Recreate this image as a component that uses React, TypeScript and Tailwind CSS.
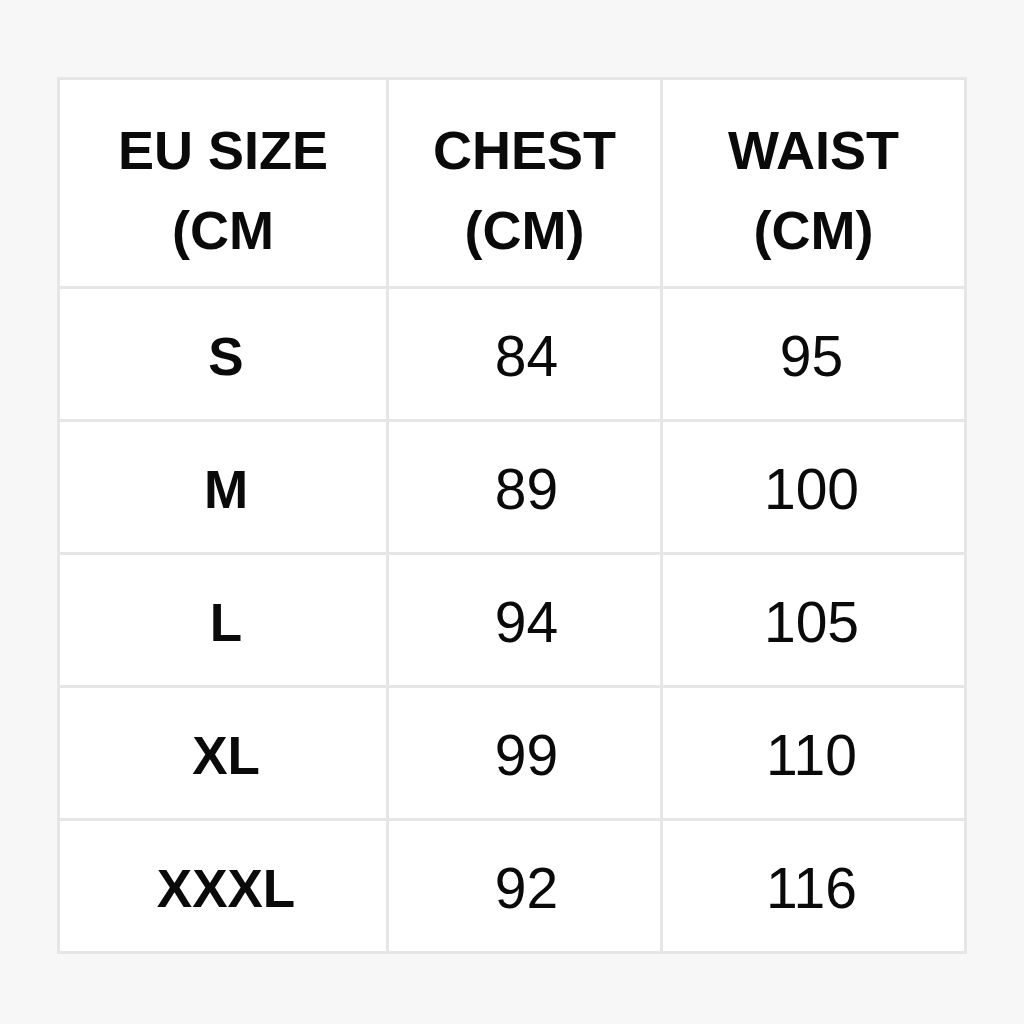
import React from "react";

const rows = [
  ["S", "84", "95"],
  ["M", "89", "100"],
  ["L", "94", "105"],
  ["XL", "99", "110"],
  ["XXXL", "92", "116"],
];

export default function App() {
  return (
    <div
      className="w-[1024px] h-[1024px] bg-[#f7f7f7] pt-[77px] pl-[57px] text-[#0a0a0a]"
      style={{ fontFamily: '"Liberation Sans", Arial, sans-serif' }}
    >
      <div className="grid grid-cols-[326px_271px_301px] grid-rows-[206px_repeat(5,130px)] gap-[3px] p-[3px] bg-[#e6e6e6] w-[910px]">
        {["EU SIZE\n(CM", "CHEST\n(CM)", "WAIST\n(CM)"].map((h, i) => (
          <div
            key={i}
            className="bg-white flex items-center justify-center text-center font-bold text-[54px] leading-[80px] whitespace-pre-line pt-[14px]"
          >
            {h}
          </div>
        ))}
        {rows.map((r, ri) => (
          <React.Fragment key={ri}>
            <div className="bg-white flex items-center justify-center font-bold text-[53px] pl-[6px] pt-[6px]">
              {r[0]}
            </div>
            <div className="bg-white flex items-center justify-center text-[57px] font-normal pl-[4px] pt-[6px]">
              {r[1]}
            </div>
            <div className="bg-white flex items-center justify-center text-[57px] font-normal pr-[4px] pt-[6px]">
              {r[2]}
            </div>
          </React.Fragment>
        ))}
      </div>
    </div>
  );
}
